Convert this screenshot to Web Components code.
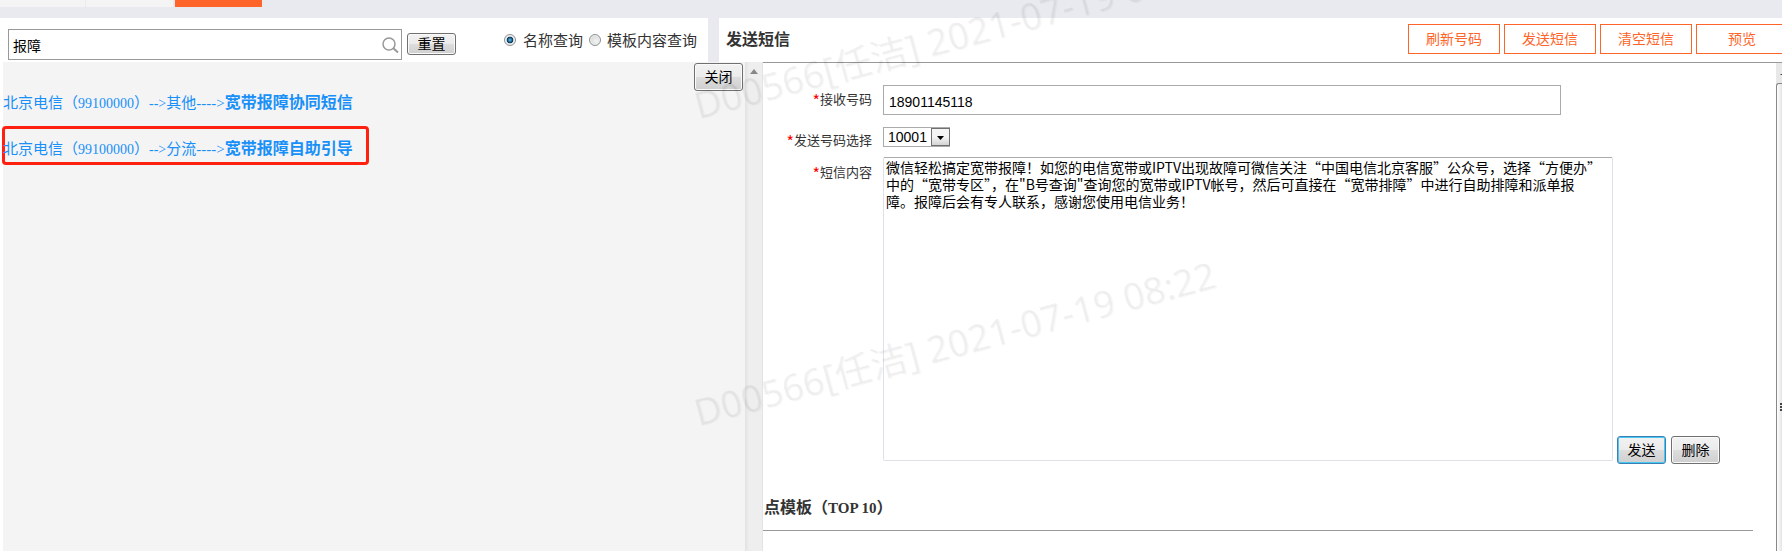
<!DOCTYPE html>
<html lang="zh-CN">
<head>
<meta charset="utf-8">
<title>发送短信</title>
<style>
html, body { height: 100%; }
body { margin: 0; overflow: hidden; background: #fff; color: #333; font: 15px/20px "Liberation Serif", "Noto Sans CJK SC", serif; }
</style>
</head>
<body>
<sms-workbench></sms-workbench>
<script>
const define = (name, html) => {
  const template = document.createElement('template');
  template.innerHTML = html;
  customElements.define(name, class extends HTMLElement {
    constructor() {
      super();
      this.attachShadow({ mode: 'open' }).append(template.content.cloneNode(true));
    }
  });
};

/* Bevelled desktop-style button; attributes: tall, focused */
define('push-button', `
<style>
:host { display: inline-block; flex: none; }
button { box-sizing: border-box; display: block; min-width: 49px; height: 22px; padding: 0 9px 2px; border: 1px solid #707070; border-radius: 3px; box-shadow: inset 0 0 0 1px #fafafa; background: linear-gradient(#f2f2f2 0 , #ebebeb 50%, #dddddd 50%, #cfcfcf); color: #000; font: 14px/18px "Noto Sans CJK SC", sans-serif; }
:host([tall]) button { height: 28px; }
:host([focused]) button { border-color: #3c7fb1; box-shadow: inset 0 0 0 1px #48c8f4; }
</style>
<button type="button"><slot></slot></button>`);

define('outline-button', `
<style>
:host { display: block; flex: none; }
button { box-sizing: border-box; display: block; width: 92px; height: 30px; padding: 0 0 3px; border: 1px solid #ff6428; background: #fff; color: #ff6428; font: 14px/20px "Noto Sans CJK SC", sans-serif; }
</style>
<button type="button"><slot></slot></button>`);

define('tab-strip', `
<style>
:host { display: flex; gap: 1px; height: 18px; background: #e8eaef; }
span { width: 85px; height: 7px; background: #f4f4f4; }
span + span { width: 87px; }
span.on { width: 87px; margin-left: 1px; background: #ff6428; }
</style>
<span></span><span></span><span class="on"></span>`);

define('search-header', `
<style>
:host { display: flex; align-items: flex-start; box-sizing: border-box; height: 44px; padding: 11px 11px 0 8px; background: #fff; }
.box { flex: 1; min-width: 0; display: flex; align-items: center; box-sizing: border-box; height: 31px; margin-right: 5px; border: 1px solid #999; }
input[type=text] { flex: 1; min-width: 0; height: 27px; box-sizing: border-box; border: 0; outline: 0; padding: 0 4px; background: none; color: #000; font: 14px/20px "Noto Sans CJK SC", sans-serif; }
svg { flex: none; width: 18px; height: 18px; margin-right: 2px; }
push-button { margin-top: 4px; }
.modes { display: flex; gap: 6px; margin-left: 48px; padding-top: 1px; }
label { display: flex; align-items: center; gap: 7px; font: 15px/20px "Noto Sans CJK SC", sans-serif; white-space: nowrap; }
label + label { gap: 6px; }
input[type=radio] { appearance: none; flex: none; box-sizing: border-box; width: 12px; height: 12px; margin: 0; border: 1px solid #8e8f8f; border-radius: 50%; background: radial-gradient(circle at 60% 60%, #f4f4f4, #c6cacd); box-shadow: inset 0 0 0 1px #f4f4f4; }
input[type=radio]:checked { background: radial-gradient(circle at 50% 50%, #5cc4ea 0, #1c5f8c 30%, #0d3450 42%, #e4e8ea 52%); }
</style>
<div class="box">
  <input type="text" aria-label="搜索" value="报障">
  <svg viewBox="0 0 18 18" fill="none" stroke="#999"><circle cx="8" cy="8" r="6" stroke-width="1.5"/><path d="M12.3 12.3 17 16.500" stroke-width="2"/></svg>
</div>
<push-button>重置</push-button>
<div class="modes">
  <label><input type="radio" name="mode" checked>名称查询</label>
  <label><input type="radio" name="mode">模板内容查询</label>
</div>`);

define('send-header', `
<style>
:host { display: flex; justify-content: space-between; align-items: flex-start; min-width: 0; box-sizing: border-box; height: 44px; padding: 6px 0 0 7px; background: #fff; overflow: hidden; }
h1 { margin: 0; padding-top: 4px; font: bold 16px/20px "Noto Sans CJK SC", sans-serif; }
div { display: flex; gap: 4px; margin-right: -6px; }
</style>
<h1>发送短信</h1>
<div>
  <outline-button>刷新号码</outline-button>
  <outline-button>发送短信</outline-button>
  <outline-button>清空短信</outline-button>
  <outline-button>预览</outline-button>
</div>`);

define('template-link', `
<style>
:host { display: flex; align-items: center; width: max-content; height: 39px; box-sizing: border-box; padding: 7px 13px 0 1px; border: 3px solid transparent; border-radius: 4px; margin-left: -1px; }
:host([marked]) { border-color: #ff2010; }
a { color: #1890f8; text-decoration: none; font: 14px/20px "Liberation Serif", "Noto Sans CJK SC", serif; white-space: nowrap; margin-left: -3px; }
span { font-size: 15px; }
b { font-size: 16px; }
</style>
<a href="#"><span>北京电信（</span>99100000<span>）</span>--&gt;<span><slot name="group"></slot>----&gt;</span><b><slot></slot></b></a>`);

define('template-list', `
<style>
:host { display: flex; min-width: 0; background: #f4f4f4; border-left: 3px solid #fff; position: relative; }
.list { flex: 1; min-width: 0; display: flex; flex-direction: column; gap: 7px; padding-top: 18px; }
.close { position: absolute; top: 1px; right: 20px; }
.bar { flex: none; width: 17px; border-right: 1px solid #e4e4e4; background: linear-gradient(90deg, #e2e2e2, #eee 4px); }
svg { display: block; margin: 7px auto 0; }
</style>
<div class="list">
  <template-link><span slot="group">其他</span>宽带报障协同短信</template-link>
  <template-link marked><span slot="group">分流</span>宽带报障自助引导</template-link>
</div>
<push-button class="close" tall>关闭</push-button>
<div class="bar"><svg width="8" height="5"><path d="M0 5 4 0 8 5z" fill="#888"/></svg></div>`);

/* Label column and field column; attribute low: the label sits lower */
define('form-row', `
<style>
:host { display: grid; grid-template-columns: 109px 1fr; column-gap: 11px; align-items: start; }
.label { text-align: right; padding-top: 4px; font: 13px/20px "Noto Sans CJK SC", sans-serif; white-space: nowrap; }
:host([low]) .label { padding-top: 15px; margin-bottom: -8px; }
i { color: #f00; font-size: 16px; font-style: normal; line-height: 0; vertical-align: -3px; }
</style>
<div class="label"><i>*</i><slot name="label"></slot></div>
<slot></slot>`);

define('send-form', `
<style>
:host { display: flex; min-width: 0; box-sizing: border-box; border-top: 1px solid #999; background: #fff; }
main { flex: 1; min-width: 0; padding-top: 22px; }
input { box-sizing: border-box; height: 30px; margin-right: 215px; padding: 4px 5px 0; border: 1px solid #aaa; outline: 0; color: #000; font: 14px/20px "Liberation Sans", sans-serif; }
.pick { position: relative; width: 67px; height: 20px; margin-top: 12px; }
select { appearance: none; display: block; box-sizing: border-box; width: 67px; height: 20px; padding: 0 4px; border: 1px solid #aaa; border-radius: 0; background: #fff; color: #000; font: 14px/18px "Liberation Sans", sans-serif; }
.pick svg { position: absolute; right: 0; top: 1px; box-sizing: border-box; width: 19px; height: 18px; border: 1px solid #707070; background: linear-gradient(#f4f4f4 50%, #d4d4d4); pointer-events: none; }
.write { display: flex; align-items: flex-end; gap: 4px; margin: 10px 56px 0 0; }
.write push-button + push-button { margin-left: 1px; }
textarea { flex: 1; min-width: 0; display: block; box-sizing: border-box; height: 304px; margin: 0 0 3px; padding: 1px 2px; resize: none; border: 1px solid #dfe1e8; border-top-color: #aaa; border-radius: 2px; outline: 0; overflow: hidden; color: #000; font: 14px/17px "Noto Sans CJK SC", monospace; }
h2 { margin: 32px 23px 0 0; padding: 0 2px 10px 1px; border-bottom: 1px solid #999; font: bold 15px/24px "Liberation Serif", "Noto Sans CJK SC", serif; }
h2 span { font-size: 16px; }
.bar { flex: none; display: flex; flex-direction: column; box-sizing: border-box; width: 6px; overflow: hidden; background: #e8e8e8; }
.bar svg { flex: none; display: block; width: 6px; height: 20px; }
.thumb { flex: 1; display: flex; padding-top: 319px; border: 1px solid #888; border-width: 1px 0 0 1px; border-radius: 3px 0 0; background: linear-gradient(90deg, #fff, #e4e4e4); }
.thumb svg { width: 5px; height: 10px; }
</style>
<main>
  <form-row><label slot="label" for="to">接收号码</label><input id="to" type="text" value="18901145118"></form-row>
  <form-row low>
    <label slot="label" for="from">发送号码选择</label>
    <div class="pick"><select id="from"><option>10001</option></select><svg viewBox="0 0 17 16"><path d="M5 7h7l-3.500 4z" fill="#000"/></svg></div>
  </form-row>
  <form-row low>
    <label slot="label" for="text">短信内容</label>
    <div class="write">
      <textarea id="text">微信轻松搞定宽带报障！如您的电信宽带或IPTV出现故障可微信关注“中国电信北京客服”公众号，选择“方便办”中的“宽带专区”，在"B号查询"查询您的宽带或IPTV帐号，然后可直接在“宽带排障”中进行自助排障和派单报
障。报障后会有专人联系，感谢您使用电信业务！</textarea>
      <push-button tall focused>发送</push-button>
      <push-button tall>删除</push-button>
    </div>
  </form-row>
  <h2><span>点模板（</span>TOP 10<span>）</span></h2>
</main>
<div class="bar"><svg><path d="M4 12h2v-1h-1z" fill="#444"/></svg><div class="thumb"><svg><path d="M3 0h3v2H3zM3 3h3v2H3zM3 6h3v2H3z" fill="#444"/></svg></div></div>`);

define('page-watermark', `
<style>
:host { position: absolute; left: 699px; pointer-events: none; white-space: pre; transform-origin: 0 100%; transform: rotate(-15deg); color: rgba(0,0,0,.04); text-shadow: 1px 1px 1px rgba(0,0,0,.04); font: 37px/36px "Noto Sans", "Noto Sans CJK SC", sans-serif; }
</style><slot></slot>`);

define('sms-workbench', `
<style>
:host { position: relative; display: flex; flex-direction: column; min-height: 100vh; overflow: hidden; }
.head { display: grid; grid-template-columns: 708fr 1063fr; column-gap: 11px; background: #e8eaef; }
.body { flex: 1; display: grid; grid-template-columns: 763fr 1019fr; }
.first { top: 51px; }
.second { top: 358px; }
</style>
<tab-strip></tab-strip>
<div class="head"><search-header></search-header><send-header></send-header></div>
<div class="body"><template-list></template-list><send-form></send-form></div>
<page-watermark class="first">D00566[任洁] 2021-07-19 08:22</page-watermark>
<page-watermark class="second">D00566[任洁] 2021-07-19 08:22</page-watermark>`);
</script>
</body>
</html>
